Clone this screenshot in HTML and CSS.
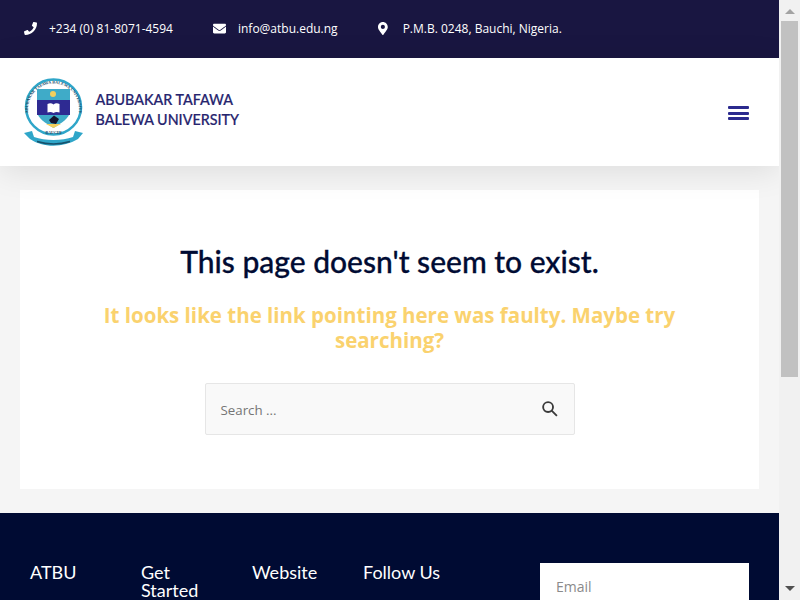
FILE: index.html
```html
<!DOCTYPE html>
<html lang="en">
<head>
<meta charset="utf-8">
<title>Page not found – ATBU</title>
<link rel="stylesheet" href="styles.css">
</head>
<body>
<div class="viewport">
  <div class="page">
    <div class="topbar">
      <div class="contact">
        <svg class="ci" width="13" height="13" viewBox="0 0 512 512"><path d="M493.4 24.6l-104-24c-11.3-2.6-22.9 3.3-27.5 13.9l-48 112c-4.2 9.8-1.4 21.3 6.9 28l60.6 49.6c-36 76.7-98.9 140.5-177.2 177.2l-49.6-60.6c-6.8-8.3-18.2-11.1-28-6.9l-112 48C3.9 366.5-2 378.1.6 389.400l24 104C27.1 504.2 36.7 512 48 512c256.1 0 464-207.5 464-464 0-11.2-7.7-20.9-18.6-23.4z"/></svg>
        <span>+234 (0) 81-8071-4594</span>
      </div>
      <div class="contact">
        <svg class="ci" width="13" height="13" viewBox="0 0 512 512"><path d="M502.3 190.8c3.900-3.100 9.700-.2 9.700 4.700V400c0 26.500-21.500 48-48 48H48c-26.500 0-48-21.500-48-48V195.600c0-5 5.700-7.800 9.700-4.700 22.400 17.400 52.100 39.500 154.100 113.600 21.100 15.400 56.700 47.800 92.200 47.600 35.700.3 72-32.800 92.300-47.600 102-74.100 131.600-96.300 154-113.700zM256 320c23.200.4 56.600-29.200 73.400-41.400 132.700-96.300 142.800-104.700 173.400-128.700 5.800-4.500 9.200-11.500 9.200-18.900v-19c0-26.500-21.500-48-48-48H48C21.500 64 0 85.500 0 112v19c0 7.400 3.400 14.300 9.200 18.900 30.600 23.900 40.700 32.400 173.400 128.700 16.800 12.200 50.200 41.800 73.400 41.400z"/></svg>
        <span>info@atbu.edu.ng</span>
      </div>
      <div class="contact">
        <svg class="ci" width="13" height="13" viewBox="0 0 384 512" preserveAspectRatio="xMinYMid"><path d="M172.268 501.670C26.970 291.031 0 269.413 0 192 0 85.961 85.961 0 192 0s192 85.961 192 192c0 77.413-26.970 99.031-172.268 309.670-9.535 13.774-29.930 13.773-39.464 0zM192 272c44.183 0 80-35.817 80-80s-35.817-80-80-80-80 35.817-80 80 35.817 80 80 80z"/></svg>
        <span>P.M.B. 0248, Bauchi, Nigeria.</span>
      </div>
    </div>

    <header class="masthead">
      <div class="brand">
        <svg class="crest" width="62" height="70" viewBox="0 0 62 70">
          <defs><path id="ringtext" d="M7 41 A25.500 25.500 0 1 1 54 41"/></defs>
          <circle cx="30.500" cy="29" r="27.500" fill="#fff" stroke="#2fa6c9" stroke-width="2.500"/>
          <text class="ringlabel"><textPath href="#ringtext" startOffset="50%" text-anchor="middle">ABUBAKAR TAFAWA BALEWA UNIVERSITY</textPath></text>
          <path d="M14 11 H47 V32 C47 41 38 45 30.500 50 C23 45 14 41 14 32 Z" fill="#3fabc8"/>
          <rect x="14" y="22" width="33" height="15" fill="#2e2a92"/>
          <circle cx="30" cy="16" r="3" fill="#f3cf5c"/>
          <path d="M24.500 26 Q28 24.500 30.500 26.500 Q33 24.500 36.500 26 V34.500 Q33 33.500 30.500 35 Q28 33.500 24.500 34.500 Z" fill="#fff"/>
          <path d="M26 42 L31 37.500 L36 41 L33 46 L28 45 Z" fill="#14142c"/>
          <path d="M23 46 H38 L30.500 50 Z" fill="#f3cf5c"/>
          <text class="seatlabel" x="30.500" y="56" text-anchor="middle">BAUCHI</text>
          <path d="M1 55 L9 53 L11 59 C22 63 39 63 50 59 L52 53 L60 55 L55 61 C40 70 20 70 7 61 Z" fill="#2fa6c9"/>
          <path d="M14 63.500 C24 66.500 37 66.500 47 63.500" fill="none" stroke="#17506b" stroke-width="1.500"/>
        </svg>
        <div class="wordmark"><span>ABUBAKAR TAFAWA</span><span>BALEWA UNIVERSITY</span></div>
      </div>
      <svg class="burger" width="21" height="14" viewBox="0 0 21 14"><rect y="0" width="21" height="3" rx="1"/><rect y="6" width="21" height="3" rx="1"/><rect y="11" width="21" height="3" rx="1"/></svg>
    </header>

    <main class="content">
      <section class="card">
        <h1>This page doesn't seem to exist.</h1>
        <p class="lead">It looks like the link pointing here was faulty. Maybe try searching?</p>
        <div class="search">
          <span class="placeholder">Search ...</span>
          <svg class="magnifier" width="17" height="17" viewBox="0 0 24 24" fill="none" stroke="#3a3a3a" stroke-width="2.600"><circle cx="10" cy="10" r="7"/><path d="M15 15l7.500 7.500"/></svg>
        </div>
      </section>
    </main>

    <footer class="footer">
      <div class="fcol"><h4>ATBU</h4></div>
      <div class="fcol"><h4>Get Started</h4></div>
      <div class="fcol"><h4>Website</h4></div>
      <div class="fcol"><h4>Follow Us</h4></div>
      <div class="subscribe"><span>Email</span></div>
    </footer>
  </div>
  <aside class="scrollbar">
    <div class="arrow-up"></div>
    <div class="thumb"></div>
    <div class="spacer"></div>
    <div class="arrow-down"></div>
  </aside>
</div>
</body>
</html>
```

FILE: styles.css
```css
* { box-sizing: border-box; }
html, body { margin: 0; height: 100%; overflow: hidden; }
body { font-family: "Open Sans", sans-serif; background: #f5f5f5; }
.viewport { display: flex; height: 600px; width: 800px; overflow: hidden; }
.page { width: 779px; flex: none; height: 600px; overflow: hidden; background: #f5f5f5; }

.topbar { height: 58px; background: #191641; color: #fff; display: flex; align-items: center; padding: 0 0 2px 24px; gap: 40px; font-size: 12px; }
.contact { display: flex; align-items: center; gap: 12px; }
.ci { fill: #fff; display: block; }

.masthead { height: 108px; background: #fff; display: flex; align-items: center; justify-content: space-between; padding: 0 30px 0 23px; box-shadow: 0 5px 30px rgba(0,0,0,.1); position: relative; }
.brand { display: flex; align-items: center; gap: 10.500px; }
.crest { overflow: hidden; margin-top: 2px; }
.wordmark { display: flex; flex-direction: column; font-family: Lato, sans-serif; font-size: 14.300px; font-weight: 500; line-height: 20px; color: #26246e; margin-top: -4px; -webkit-text-stroke: .2px #26246e; }
.ringlabel { font-family: "Liberation Serif", serif; font-size: 4.200px; font-weight: 700; fill: #1c4a66; }
.seatlabel { font-family: "Liberation Serif", serif; font-size: 4px; font-weight: 700; fill: #1c4a66; }
.burger { fill: #2b2a8e; display: block; margin-top: 1px; }

.content { padding: 24px 20px; }
.card { background: #fff; height: 299px; padding-top: 53px; display: flex; flex-direction: column; align-items: center; }
h1 { margin: 0; font-family: Lato, sans-serif; font-size: 30px; font-weight: 500; line-height: 36px; color: #000b33; -webkit-text-stroke: .3px #000b33; }
.lead { margin: 24px 0 0; width: 640px; text-align: center; font-size: 20.500px; font-weight: 700; line-height: 25px; color: #fad26e; }
.search { margin-top: 30px; width: 370px; height: 52px; background: #f9f9f9; border: 1px solid #e6e6e6; border-radius: 2px; display: flex; align-items: center; justify-content: space-between; padding: 0 16px 0 15px; }
.placeholder { font-size: 13.300px; color: #757575; padding-top: 2px; }
.magnifier { margin-top: -2px; }

.footer { height: 87px; background: #000b33; display: flex; padding: 50px 30px 0; color: #fff; overflow: hidden; }
.fcol { width: 111px; }
h4 { margin: 0; font-family: Lato, sans-serif; font-size: 18px; font-weight: 400; line-height: 18px; width: 85px; }
.subscribe { margin-left: 66px; width: 209px; height: 60px; background: #fff; padding: 14px 16px; font-size: 14px; color: #8a8a8a; }

.scrollbar { width: 21px; flex: none; background: #f1f1f1; display: flex; flex-direction: column; align-items: center; }
.arrow-up { margin-top: 9px; border-left: 5px solid transparent; border-right: 5px solid transparent; border-bottom: 5px solid #a3a3a3; }
.thumb { margin-top: 7px; width: 17px; height: 356px; background: #c1c1c1; flex: none; }
.spacer { flex: 1; }
.arrow-down { margin-bottom: 9px; border-left: 5px solid transparent; border-right: 5px solid transparent; border-top: 5px solid #505050; }
```
